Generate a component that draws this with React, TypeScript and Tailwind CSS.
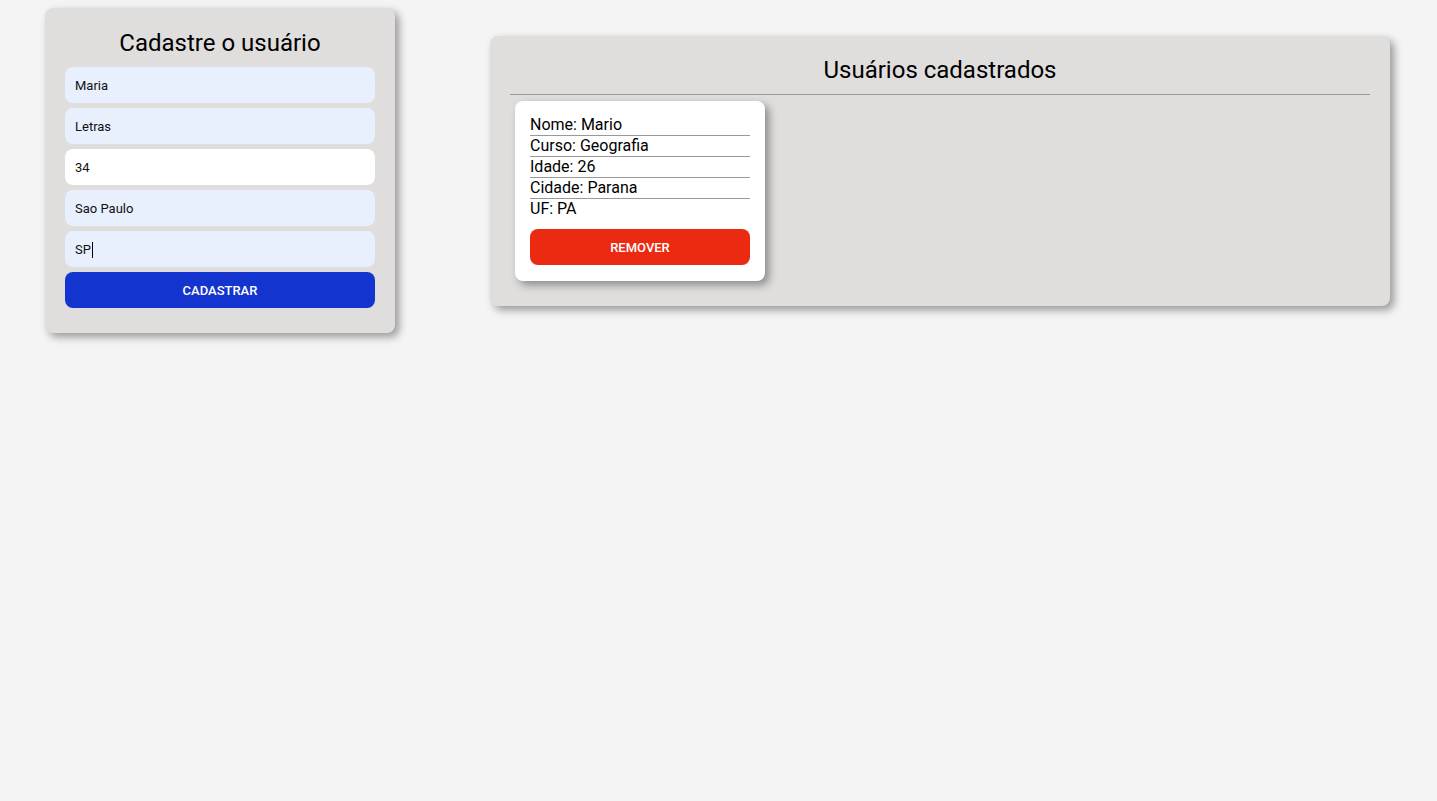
import React from "react";

export default function App() {
  const inputs = [
    { v: "Maria", bg: "bg-[#e8f0fe]" },
    { v: "Letras", bg: "bg-[#e8f0fe]" },
    { v: "34", bg: "bg-white" },
    { v: "Sao Paulo", bg: "bg-[#e8f0fe]" },
    { v: "SP", bg: "bg-[#e8f0fe]", caret: true },
  ];
  const rows = ["Nome: Mario", "Curso: Geografia", "Idade: 26", "Cidade: Parana", "UF: PA"];
  return (
    <div className="min-h-[801px] w-full bg-[#f4f4f4] font-['Roboto',sans-serif] text-black">
      <div className="flex items-start">
        <div className="ml-[45px] mt-[8px] w-[350px] rounded-[8px] bg-[#dfdedc] px-[20px] pb-[25px] shadow-[4px_4px_8px_rgba(0,0,0,0.38)]">
          <h2 className="flex h-[59px] items-center justify-center pt-[10px] text-[24px] leading-[28px]">Cadastre o usuário</h2>
          <div className="flex flex-col gap-[5px]">
            {inputs.map((i) => (
              <div key={i.v} className={`flex h-[36px] items-center rounded-[8px] ${i.bg} px-[10px] pt-[2px] text-[13px] text-[#111]`}>
                <span>{i.v}</span>
                {i.caret && <span className="ml-[1px] inline-block h-[16px] w-[1px] bg-black" />}
              </div>
            ))}
            <button className="flex h-[36px] items-center justify-center rounded-[8px] bg-[#1434cf] pt-[1px] text-[13px] font-medium text-white">
              CADASTRAR
            </button>
          </div>
        </div>
        <div className="ml-[95px] mt-[36px] w-[900px] rounded-[8px] bg-[#dfdedc] px-[20px] pb-[25px] shadow-[4px_4px_8px_rgba(0,0,0,0.38)]">
          <h2 className="flex h-[59px] items-center justify-center border-b border-[#999] pt-[10px] text-[24px] leading-[28px]">Usuários cadastrados</h2>
          <div className="mt-[6px] flex">
            <div className="ml-[5px] w-[250px] rounded-[8px] bg-white px-[15px] pb-[16px] pt-[14px] shadow-[4px_4px_8px_rgba(0,0,0,0.38)]">
              {rows.map((r, idx) => (
                <div key={r} className={`h-[21px] pr-[1px] text-[16px] leading-[20px] ${idx < rows.length - 1 ? "border-b border-[#999]" : ""}`}>
                  {r}
                </div>
              ))}
              <button className="mt-[9px] flex h-[36px] w-full items-center justify-center rounded-[8px] bg-[#ec2a12] pt-[2px] text-[13px] font-medium text-white">
                REMOVER
              </button>
            </div>
          </div>
        </div>
      </div>
    </div>
  );
}
